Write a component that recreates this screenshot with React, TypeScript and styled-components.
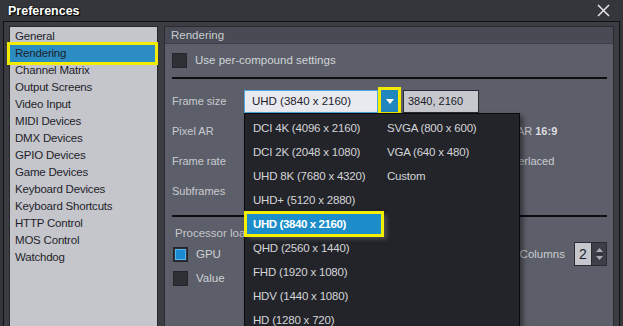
import React from 'react';
import styled, { createGlobalStyle, css } from 'styled-components';

const Global = createGlobalStyle`
  html, body { margin: 0; padding: 0; background: #3b3c41; }
  body { font-family: "Liberation Sans", Arial, sans-serif; font-size: 11px; }
  * { box-sizing: border-box; }
`;

const Window = styled.div`
  width: 623px;
  height: 326px;
  overflow: hidden;
  display: flex;
  flex-direction: column;
  background: #35363b;
`;

const TitleBar = styled.div`
  height: 21px;
  flex: none;
  display: flex;
  align-items: center;
  justify-content: space-between;
  padding: 0 13px 0 8px;
  background: #35363b;
`;

const Title = styled.div`
  font-weight: bold;
  font-size: 12.5px;
  color: #ffffff;
  text-shadow: 0 0 2px #000, 1px 1px 1px #000;
`;

const CloseButton = styled.div`
  width: 13px;
  height: 13px;
  display: flex;
`;

const Frame = styled.div`
  flex: 1;
  min-height: 0;
  margin: 0 3px;
  border: 1px solid #111113;
  border-bottom: none;
  background: #3c3d43;
  padding: 4px 5px 0;
  display: flex;
  gap: 6px;
`;

const Sidebar = styled.ul`
  width: 149px;
  flex: none;
  margin: 0;
  padding: 1px 0 0;
  list-style: none;
  background: #c5c6cc;
  border: 1px solid #26272b;
  border-bottom: none;
  font-size: 11.5px;
`;

const NavItem = styled.li<{ $active?: boolean }>`
  height: 17px;
  line-height: 17px;
  padding-left: 5px;
  margin-right: 2px;
  color: #1f1f2a;
  white-space: nowrap;
  letter-spacing: -0.2px;
  ${(p) =>
    p.$active &&
    css`
      background: #2b8dc2;
      outline: 3px solid #f3eb00;
      position: relative;
    `}
`;

const Panel = styled.section`
  flex: 1;
  min-width: 0;
  position: relative;
  display: flex;
  flex-direction: column;
  background: #5c5f69;
  border: 1px solid #2b2c31;
  border-bottom: none;
`;

const PanelHeader = styled.div`
  height: 17px;
  line-height: 16px;
  padding-left: 6px;
  background: #484b54;
  color: #c9cbd0;
  border-bottom: 1px solid #3d3f47;
  font-size: 11.5px;
`;

const PanelBody = styled.div`
  padding: 8px 6px 0 7px;
  display: flex;
  flex-direction: column;
`;

const CheckRow = styled.div`
  height: 16px;
  display: flex;
  align-items: center;
  color: #d2d4d8;
  font-size: 11.5px;
`;

const Check = styled.span<{ $checked?: boolean }>`
  width: 15px;
  height: 15px;
  flex: none;
  margin-right: 8px;
  background: #2f3035;
  border: 1px solid #24252a;
  display: flex;
  align-items: center;
  justify-content: center;
  ${(p) =>
    p.$checked &&
    css`
      &::after {
        content: '';
        width: 9px;
        height: 9px;
        background: #1b8ad0;
        border: 1px solid #58b4ea;
      }
    `}
`;

const Separator = styled.div<{ $mt: number }>`
  height: 2px;
  margin-top: ${(p) => p.$mt}px;
  background: #0e0e10;
`;

const FormRow = styled.div<{ $mt?: number }>`
  height: 30px;
  margin-top: ${(p) => p.$mt ?? 0}px;
  display: flex;
  align-items: center;
  color: #c9cbd0;
`;

const Label = styled.span`
  width: 72px;
  flex: none;
`;

const Combo = styled.div`
  width: 134px;
  height: 23px;
  flex: none;
  display: flex;
  align-items: center;
  padding-left: 7px;
  background: #e9eaef;
  border: 1px solid #4ea7da;
  color: #1c1c2c;
  font-size: 11.5px;
`;

const DropButton = styled.div`
  width: 17px;
  height: 22px;
  flex: none;
  margin-left: 3px;
  background: #1f86be;
  outline: 3px solid #f3eb00;
  display: flex;
  align-items: center;
  justify-content: center;
`;

const ValueBox = styled.div`
  width: 76px;
  height: 23px;
  margin-left: 5px;
  display: flex;
  align-items: center;
  padding-left: 4px;
  background: #c7c8cd;
  border: 1px solid #2b2c31;
  color: #1a1a28;
`;

const Aside = styled.span<{ $ml: number }>`
  margin-left: ${(p) => p.$ml}px;
  display: flex;
  align-items: center;
  color: #c9cbd0;
  white-space: nowrap;
  b { color: #dcdde0; margin-left: 3px; }
`;

const GroupLabel = styled.div`
  height: 14px;
  line-height: 14px;
  margin-top: 9px;
  padding-left: 3px;
  color: #c4c6cc;
  font-size: 11.5px;
`;

const OptionRow = styled.div<{ $mt?: number }>`
  height: 24px;
  margin-top: ${(p) => p.$mt ?? 0}px;
  display: flex;
  align-items: center;
  padding-left: 1px;
  color: #cfd1d5;
  font-size: 11.5px;
`;

const OptionLabel = styled.span`
  width: 49px;
  flex: none;
`;

const Field = styled.span`
  width: 110px;
  height: 15px;
  background: #44464e;
  border: 1px solid #26272c;
`;

const Columns = styled.span`
  margin-left: auto;
  margin-right: 9px;
  color: #c9cbd0;
`;

const Spin = styled.div`
  width: 33px;
  height: 24px;
  display: flex;
  border: 1px solid #2a2b30;
`;

const SpinValue = styled.span`
  flex: 1;
  background: #c6c7cc;
  color: #1a1a30;
  font-size: 14px;
  display: flex;
  align-items: center;
  justify-content: center;
`;

const SpinArrows = styled.span`
  width: 15px;
  background: #3d3f46;
  border-left: 1px solid #2a2b30;
  display: flex;
  align-items: center;
  justify-content: center;
`;

const Popup = styled.div`
  position: absolute;
  left: 79px;
  top: 86px;
  width: 276px;
  height: 240px;
  background: #232429;
  border: 1px solid #0b0b0d;
  box-shadow: 3px 3px 5px rgba(0, 0, 0, 0.45);
  padding-top: 2px;
  display: flex;
`;

const PopupColumn = styled.div<{ $w?: number }>`
  ${(p) => (p.$w ? `width: ${p.$w}px;` : 'flex: 1;')}
  display: flex;
  flex-direction: column;
`;

const PopupItem = styled.div<{ $selected?: boolean; $pl: number }>`
  height: 24px;
  line-height: 24px;
  flex: none;
  padding-left: ${(p) => p.$pl}px;
  color: #d4d5d8;
  font-size: 11.5px;
  letter-spacing: -0.2px;
  white-space: nowrap;
  ${(p) =>
    p.$selected &&
    css`
      background: #1d8dc9;
      color: #ffffff;
      font-weight: bold;
      letter-spacing: -0.4px;
      outline: 3px solid #f5ee00;
      outline-offset: -2px;
      box-shadow: 4px 3px 4px rgba(110, 110, 118, 0.55);
      position: relative;
    `}
`;

const navItems = [
  'General',
  'Rendering',
  'Channel Matrix',
  'Output Screens',
  'Video Input',
  'MIDI Devices',
  'DMX Devices',
  'GPIO Devices',
  'Game Devices',
  'Keyboard Devices',
  'Keyboard Shortcuts',
  'HTTP Control',
  'MOS Control',
  'Watchdog',
];

const sizesLeft = [
  'DCI 4K (4096 x 2160)',
  'DCI 2K (2048 x 1080)',
  'UHD 8K (7680 x 4320)',
  'UHD+ (5120 x 2880)',
  'UHD (3840 x 2160)',
  'QHD (2560 x 1440)',
  'FHD (1920 x 1080)',
  'HDV (1440 x 1080)',
  'HD (1280 x 720)',
];
const sizesRight = ['SVGA (800 x 600)', 'VGA (640 x 480)', 'Custom'];

export default function App() {
  return (
    <>
      <Global />
      <Window>
        <TitleBar>
          <Title>Preferences</Title>
          <CloseButton>
            <svg width="13" height="13" viewBox="0 0 13 13">
              <path d="M1 1 L12 12 M12 1 L1 12" stroke="#e6e6e8" strokeWidth="1.5" fill="none" />
            </svg>
          </CloseButton>
        </TitleBar>
        <Frame>
          <Sidebar>
            {navItems.map((n) => (
              <NavItem key={n} $active={n === 'Rendering'}>
                {n}
              </NavItem>
            ))}
          </Sidebar>
          <Panel>
            <PanelHeader>Rendering</PanelHeader>
            <PanelBody>
              <CheckRow>
                <Check />
                Use per-compound settings
              </CheckRow>
              <Separator $mt={9} />
              <FormRow $mt={7}>
                <Label>Frame size</Label>
                <Combo>UHD (3840 x 2160)</Combo>
                <DropButton>
                  <svg width="8" height="5" viewBox="0 0 8 5">
                    <path d="M0 0 H8 L4 5 Z" fill="#ffffff" />
                  </svg>
                </DropButton>
                <ValueBox>3840, 2160</ValueBox>
              </FormRow>
              <FormRow>
                <Label>Pixel AR</Label>
                <Combo />
                <Aside $ml={131}>
                  DAR <b>16:9</b>
                </Aside>
              </FormRow>
              <FormRow>
                <Label>Frame rate</Label>
                <Combo />
                <Aside $ml={105}>
                  <Check />
                  Interlaced
                </Aside>
              </FormRow>
              <FormRow>
                <Label>Subframes</Label>
                <Combo />
              </FormRow>
              <Separator $mt={9} />
              <GroupLabel>Processor load</GroupLabel>
              <OptionRow $mt={2}>
                <Check $checked />
                <OptionLabel>GPU</OptionLabel>
                <Field />
                <Columns>Columns</Columns>
                <Spin>
                  <SpinValue>2</SpinValue>
                  <SpinArrows>
                    <svg width="9" height="14" viewBox="0 0 9 14">
                      <path d="M4.5 1 L8 5 H1 Z" fill="#a9abb2" />
                      <path d="M1 7 H8" stroke="#2a2b30" strokeWidth="1" />
                      <path d="M1 9 H8 L4.5 13 Z" fill="#a9abb2" />
                    </svg>
                  </SpinArrows>
                </Spin>
              </OptionRow>
              <OptionRow>
                <Check />
                <OptionLabel>Value</OptionLabel>
                <Field />
              </OptionRow>
            </PanelBody>
            <Popup>
              <PopupColumn $w={138}>
                {sizesLeft.map((s) => (
                  <PopupItem key={s} $pl={8} $selected={s === 'UHD (3840 x 2160)'}>
                    {s}
                  </PopupItem>
                ))}
              </PopupColumn>
              <PopupColumn>
                {sizesRight.map((s) => (
                  <PopupItem key={s} $pl={4}>
                    {s}
                  </PopupItem>
                ))}
              </PopupColumn>
            </Popup>
          </Panel>
        </Frame>
      </Window>
    </>
  );
}
